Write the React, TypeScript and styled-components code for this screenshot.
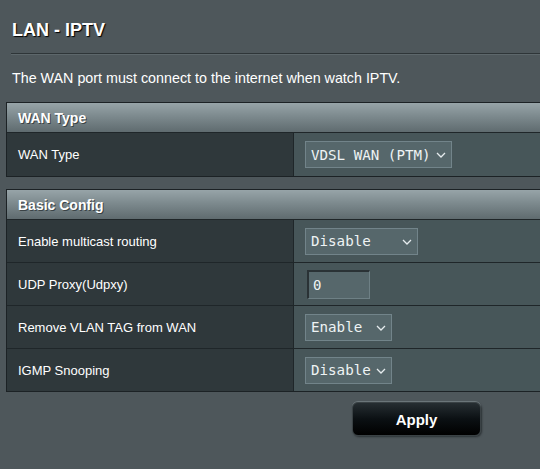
import React from "react";
import styled, { createGlobalStyle } from "styled-components";

const GlobalStyle = createGlobalStyle`
  html, body {
    margin: 0;
    padding: 0;
    background: #4e575b;
    overflow: hidden;
  }
  body {
    font-family: "Liberation Sans", Arial, sans-serif;
    color: #ffffff;
  }
`;

const Page = styled.div`
  width: 540px;
  height: 469px;
  overflow: hidden;
  background: #4e575b;
`;

const Title = styled.h1`
  margin: 0;
  padding: 20px 0 0 12px;
  font-size: 18px;
  line-height: 20px;
  font-weight: bold;
  color: #ffffff;
  text-shadow: 1px 1px 1px #000;
`;

const Divider = styled.div`
  margin: 13px 0 0 11px;
  height: 1px;
  background: #2e3538;
  box-shadow: 0 1px 0 #5d676b;
`;

const Description = styled.p`
  margin: 16px 0 0 12px;
  font-size: 14.3px;
  line-height: 16px;
  color: #ffffff;
`;

const Table = styled.div<{ $top: number }>`
  margin: ${(p) => p.$top}px 0 0 6px;
  width: 820px;
  border: 1px solid #1c2225;
`;

const Header = styled.div`
  height: 30px;
  display: flex;
  align-items: center;
  padding: 1px 0 0 11px;
  box-sizing: border-box;
  font-size: 14px;
  font-weight: bold;
  background: linear-gradient(#97a4a8 0%, #7d8a8e 45%, #5f6b6f 100%);
  border-bottom: 1px solid #1f2629;
  text-shadow: 1px 1px 0 #3a4346;
`;

const Row = styled.div<{ $h: number }>`
  display: grid;
  grid-template-columns: 286px 1fr;
  height: ${(p) => p.$h}px;
  & + & {
    border-top: 1px solid #1f2629;
  }
`;

const LabelCell = styled.div`
  display: flex;
  align-items: center;
  padding-left: 11px;
  background: #2f383b;
  font-size: 13px;
  color: #ffffff;
`;

const ValueCell = styled.div`
  display: flex;
  align-items: center;
  padding-left: 11px;
  background: #475659;
  border-left: 1px solid #1f2629;
`;

const SelectWrap = styled.div<{ $w: number }>`
  position: relative;
  width: ${(p) => p.$w}px;
  height: 27px;
`;

const NativeSelect = styled.select`
  appearance: none;
  -webkit-appearance: none;
  width: 100%;
  height: 100%;
  margin: 0;
  padding: 0 0 0 5px;
  box-sizing: border-box;
  background: #56676b;
  border: 1px solid #72848a;
  border-radius: 0;
  color: #eef3f4;
  font-family: "DejaVu Sans Mono", monospace;
  font-size: 14.2px;
  outline: none;
`;

const Chevron = styled.svg`
  position: absolute;
  right: 6px;
  top: 11px;
  pointer-events: none;
`;

const TextInput = styled.input`
  width: 63px;
  height: 29px;
  margin-left: 2px;
  box-sizing: border-box;
  padding: 0 0 0 4px;
  background: #56676b;
  border: 1px solid;
  border-color: #2a3235 #6e8085 #6e8085 #2a3235;
  border-width: 2px 1px 1px 2px;
  color: #eef3f4;
  font-family: "DejaVu Sans Mono", monospace;
  font-size: 14px;
  outline: none;
`;

const ButtonBar = styled.div`
  display: flex;
  padding: 10px 0 0 352px;
`;

const ApplyButton = styled.button`
  width: 129px;
  height: 34px;
  border-radius: 6px;
  border: 1px solid #3a4245;
  background: linear-gradient(#262e32 0%, #0b1013 50%, #000 100%);
  box-shadow: 0 -1px 0 #6b767a, 1px 1px 2px #2b3134;
  color: #ffffff;
  font-family: "Liberation Sans", Arial, sans-serif;
  font-size: 15px;
  font-weight: bold;
  cursor: pointer;
`;

type SelectProps = { value: string; options: string[]; width: number };

const Select = ({ value, options, width }: SelectProps) => (
  <SelectWrap $w={width}>
    <NativeSelect defaultValue={value}>
      {options.map((o) => (
        <option key={o} value={o}>
          {o}
        </option>
      ))}
    </NativeSelect>
    <Chevron width="10" height="6" viewBox="0 0 10 6">
      <path d="M1 1 L5 5 L9 1" fill="none" stroke="#e6ecee" strokeWidth="1.3" />
    </Chevron>
  </SelectWrap>
);

export default function App() {
  return (
    <Page>
      <GlobalStyle />
      <Title>LAN - IPTV</Title>
      <Divider />
      <Description>The WAN port must connect to the internet when watch IPTV.</Description>

      <Table $top={16}>
        <Header>WAN Type</Header>
        <Row $h={43}>
          <LabelCell>WAN Type</LabelCell>
          <ValueCell>
            <Select
              value="VDSL WAN (PTM)"
              options={["VDSL WAN (PTM)", "ADSL WAN (ATM)", "Ethernet WAN"]}
              width={147}
            />
          </ValueCell>
        </Row>
      </Table>

      <Table $top={12}>
        <Header>Basic Config</Header>
        <Row $h={42}>
          <LabelCell>Enable multicast routing</LabelCell>
          <ValueCell>
            <Select value="Disable" options={["Disable", "Enable"]} width={113} />
          </ValueCell>
        </Row>
        <Row $h={42}>
          <LabelCell>UDP Proxy(Udpxy)</LabelCell>
          <ValueCell>
            <TextInput defaultValue="0" />
          </ValueCell>
        </Row>
        <Row $h={42}>
          <LabelCell>Remove VLAN TAG from WAN</LabelCell>
          <ValueCell>
            <Select value="Enable" options={["Enable", "Disable"]} width={87} />
          </ValueCell>
        </Row>
        <Row $h={42}>
          <LabelCell>IGMP Snooping</LabelCell>
          <ValueCell>
            <Select value="Disable" options={["Disable", "Enable"]} width={87} />
          </ValueCell>
        </Row>
      </Table>

      <ButtonBar>
        <ApplyButton>Apply</ApplyButton>
      </ButtonBar>
    </Page>
  );
}
